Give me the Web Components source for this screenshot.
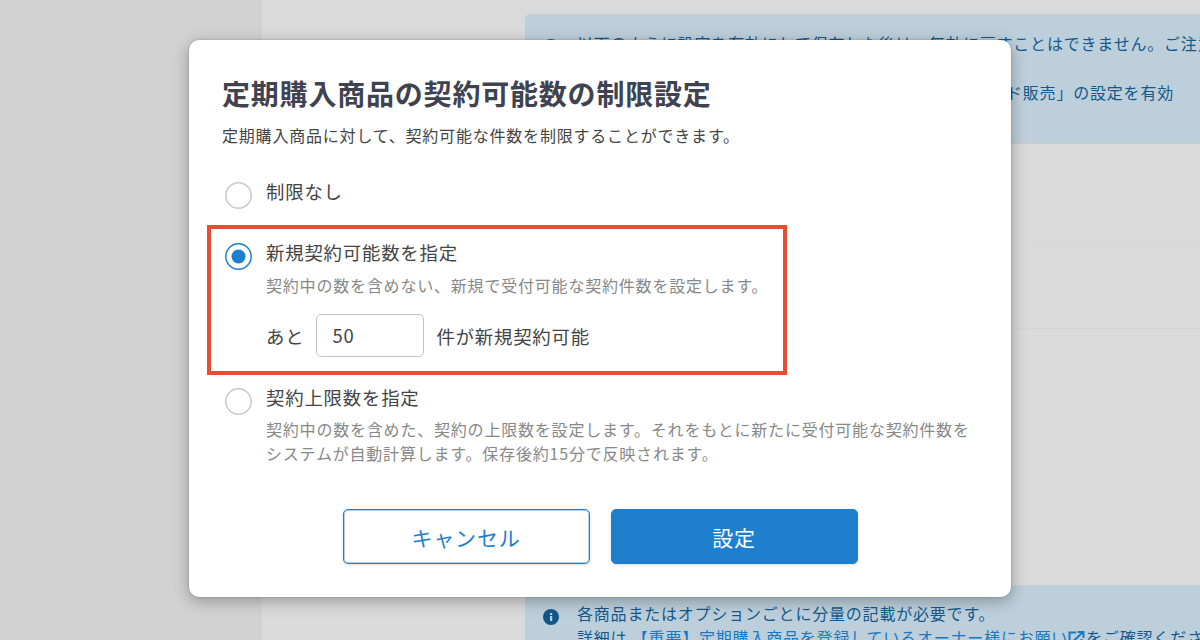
<!DOCTYPE html>
<html lang="ja">
<head>
<meta charset="utf-8">
<style>
  html, body { margin: 0; height: 100%; overflow: hidden; }
  body { font-family: "Noto Sans CJK JP", "Noto Sans", sans-serif; }
</style>
</head>
<body>
<settings-page>
  <info-note slot="top" first>
    <p>以下のように設定を有効にして保存した後は、無効に戻すことはできません。ご注意ください。</p>
    <p style="margin-top:25px;padding-left:429px">ド販売」の設定を有効</p>
  </info-note>
  <info-note slot="bottom">
    <p>各商品またはオプションごとに分量の記載が必要です。</p>
    <p>詳細は<ext-link>【重要】定期購入商品を登録しているオーナー様にお願い</ext-link>をご確認ください。</p>
  </info-note>
</settings-page>

<limit-dialog>
  <span slot="title">定期購入商品の契約可能数の制限設定</span>
  <span slot="lead">定期購入商品に対して、契約可能な件数を制限することができます。</span>
  <radio-option label="制限なし"></radio-option>
  <radio-option slot="highlight" checked label="新規契約可能数を指定" desc="契約中の数を含めない、新規で受付可能な契約件数を設定します。">
    <count-field value="50"></count-field>
  </radio-option>
  <radio-option slot="last" label="契約上限数を指定" desc="契約中の数を含めた、契約の上限数を設定します。それをもとに新たに受付可能な契約件数をシステムが自動計算します。保存後約15分で反映されます。"></radio-option>
  <app-button slot="actions">キャンセル</app-button>
  <app-button slot="actions" primary>設定</app-button>
</limit-dialog>

<script>
class SettingsPage extends HTMLElement {
  constructor() {
    super();
    this.attachShadow({ mode: 'open' }).innerHTML = `
      <style>
        :host { display: flex; height: 640px; background: #dadada; }
        .side { width: 262px; background: #d2d2d2; flex: none; }
        .main { flex: 1; min-width: 0; padding: 14px 0 0 263px; display: flex; flex-direction: column; }
        .rows { height: 442px; flex: none; }
        .rows i { display: block; border-bottom: 1px solid #d5d5d5; }
        .rows i:nth-child(1) { height: 98px; }
        .rows i:nth-child(2) { height: 86px; }
      </style>
      <div class="side"></div>
      <div class="main">
        <slot name="top"></slot>
        <div class="rows"><i></i><i></i></div>
        <slot name="bottom"></slot>
      </div>`;
  }
}

class InfoNote extends HTMLElement {
  constructor() {
    super();
    this.attachShadow({ mode: 'open' }).innerHTML = `
      <style>
        :host { display: flex; flex: none; gap: 18px; background: #bdcfdb; color: #14598a; font-size: 16px; letter-spacing: .8px; line-height: 24px;
          padding: 16px 0 0 18px; white-space: nowrap; overflow: hidden; box-sizing: border-box; height: 55px; }
        :host([first]) { height: 129px; padding-top: 17px; border-radius: 5px 0 0 0; box-shadow: 0 1px 1px rgba(0,0,0,.06); }
        svg { flex: none; width: 16px; height: 16px; margin-top: 8px; }
        ::slotted(p) { margin: 0; }
      </style>
      <svg viewBox="0 0 16 16"><circle cx="8" cy="8" r="8" fill="#12578a"/><rect x="7" y="7" width="2.2" height="5" fill="#bdcfdb"/><rect x="7" y="4" width="2.2" height="2" fill="#bdcfdb"/></svg>
      <div><slot></slot></div>`;
  }
}

class ExtLink extends HTMLElement {
  constructor() {
    super();
    this.attachShadow({ mode: 'open' }).innerHTML = `
      <style>
        :host { color: #1a78c2; }
        svg { width: 17px; height: 15px; vertical-align: -2px; margin: 0 1px 0 0; }
      </style>
      <slot></slot><svg viewBox="0 0 17 15" fill="none" stroke="#1a78c2" stroke-width="2"><path d="M8 1.5H1.5V13.5H13.5V8"/><path d="M5.5 10L15 1M9.5 1H15.5V7"/></svg>`;
  }
}

class LimitDialog extends HTMLElement {
  constructor() {
    super();
    this.attachShadow({ mode: 'open' }).innerHTML = `
      <style>
        :host { display: block; position: absolute; left: 189px; top: 40px; width: 822px; height: 557px; box-sizing: border-box;
          background: #fff; border-radius: 10px; box-shadow: 0 0 2px rgba(0,0,0,.25), 0 4px 16px rgba(0,0,0,.3); padding: 31px 24px 0 18px; }
        h2 { margin: 0 0 0 15px; font-size: 28px; letter-spacing: .8px; line-height: 44px; font-weight: 700; color: #3f4350; }
        .lead { margin: 8px 0 0 15px; font-size: 16px; letter-spacing: .8px; line-height: 24px; color: #444; }
        .opts { margin: 30px 0 0 18px; }
        .hl { margin-top: 16px; width: 580px; height: 150px; box-sizing: border-box; border: 4px solid #e84c33; padding: 9px 14px 0; }
        .last { margin: 8px 0 0 18px; }
        .actions { display: flex; justify-content: center; gap: 21px; margin-top: 44px; padding-left: 6px; }
      </style>
      <h2><slot name="title"></slot></h2>
      <div class="lead"><slot name="lead"></slot></div>
      <div class="opts"><slot></slot></div>
      <div class="hl"><slot name="highlight"></slot></div>
      <div class="last"><slot name="last"></slot></div>
      <div class="actions"><slot name="actions"></slot></div>`;
  }
}

class RadioOption extends HTMLElement {
  constructor() {
    super();
    const label = this.getAttribute('label') || '';
    const desc = this.getAttribute('desc');
    const checked = this.hasAttribute('checked');
    this.attachShadow({ mode: 'open' }).innerHTML = `
      <style>
        :host { display: grid; grid-template-columns: 27px 1fr; column-gap: 14px; }
        svg { display: block; width: 27px; height: 27px; margin-top: 5px; }
        .label { font-size: 18.4px; letter-spacing: .8px; line-height: 28px; color: #444; }
        .desc { font-size: 16px; letter-spacing: .8px; line-height: 24px; color: #888; margin-top: 6px; width: 710px; }
        :host([checked]) .desc { margin-top: 7px; }
        ::slotted(count-field) { margin-top: 17px; }
      </style>
      <svg viewBox="0 0 27 27">
        <circle cx="13.5" cy="13.5" r="12.7" fill="#fff" stroke="${checked ? '#1d7fce' : '#c9c9c9'}" stroke-width="1.5"/>
        ${checked ? '<circle cx="13.5" cy="13.5" r="7" fill="#1d7fce"/>' : ''}
      </svg>
      <div>
        <div class="label">${label}</div>
        ${desc ? `<div class="desc">${desc}</div>` : ''}
        <slot></slot>
      </div>`;
  }
}

class CountField extends HTMLElement {
  constructor() {
    super();
    this.attachShadow({ mode: 'open' }).innerHTML = `
      <style>
        :host { display: flex; align-items: center; gap: 12px; font-size: 18.4px; letter-spacing: .8px; color: #444; }
        .box { width: 108px; height: 43px; box-sizing: border-box; border: 1px solid #c4c4c4; border-radius: 5px; padding-left: 15px; line-height: 41px; }
      </style>
      <span>あと</span>
      <div class="box">${this.getAttribute('value')}</div>
      <span>件が新規契約可能</span>`;
  }
}

class AppButton extends HTMLElement {
  constructor() {
    super();
    this.attachShadow({ mode: 'open' }).innerHTML = `
      <style>
        :host { display: flex; align-items: center; justify-content: center; width: 247px; height: 55px; box-sizing: border-box;
          border: 1px solid #1d7fce; border-radius: 5px; background: #fff; color: #1d7fce; font-size: 21px; letter-spacing: .8px;
          box-shadow: inset 0 0 0 1px rgba(29,127,206,.35), 0 1px 3px rgba(0,0,0,.15); }
        :host([primary]) { background: #1d7fce; color: #fff; }
      </style>
      <slot></slot>`;
  }
}

customElements.define('settings-page', SettingsPage);
customElements.define('info-note', InfoNote);
customElements.define('ext-link', ExtLink);
customElements.define('limit-dialog', LimitDialog);
customElements.define('radio-option', RadioOption);
customElements.define('count-field', CountField);
customElements.define('app-button', AppButton);
</script>
</body>
</html>
